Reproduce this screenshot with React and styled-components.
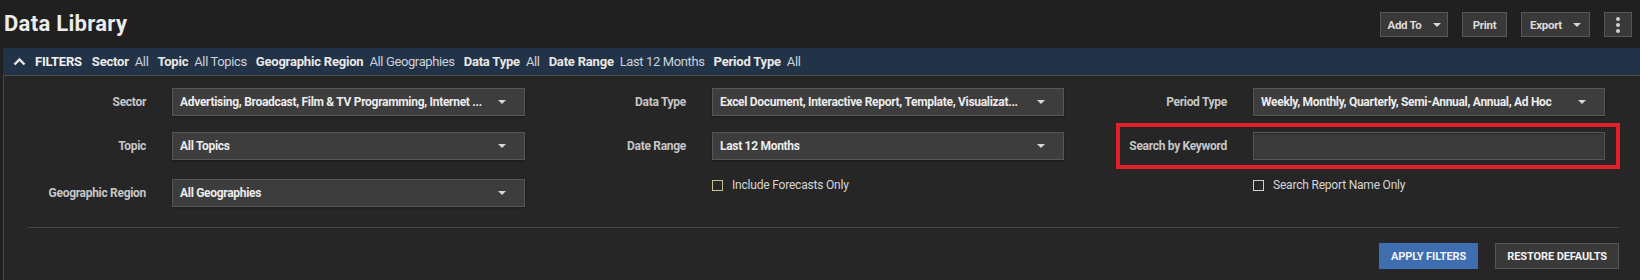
import React from "react";
import styled, { createGlobalStyle } from "styled-components";

const Global = createGlobalStyle`
  html, body { margin: 0; padding: 0; background: #202020; }
  body { font-family: Roboto, "Liberation Sans", sans-serif; color: #e6e6e6; }
  * { box-sizing: border-box; }
`;

const Page = styled.div`
  width: 1640px;
  height: 280px;
  display: flex;
  flex-direction: column;
  background: #202020;
  overflow: hidden;
`;

const Header = styled.div`
  height: 48px;
  display: flex;
  align-items: flex-start;
  justify-content: space-between;
  padding: 0 8px 0 4px;
`;

const Title = styled.h1`
  margin: 10px 0 0;
  font-size: 22px;
  line-height: 28px;
  font-weight: 700;
  color: #ececec;
  letter-spacing: 0.3px;
`;

const Actions = styled.div`
  display: flex;
  gap: 14px;
  margin-top: 12px;
`;

const ToolButton = styled.button`
  height: 25px;
  width: ${(p) => p.$w}px;
  padding: 0;
  display: flex;
  align-items: center;
  justify-content: center;
  gap: 11px;
  background: #393939;
  border: 1px solid #575757;
  color: #dcdcdc;
  font-family: Roboto, "Liberation Sans", sans-serif;
  font-size: 11.5px;
  font-weight: 700;
  letter-spacing: -0.3px;
`;

const Caret = styled.span`
  width: 0;
  height: 0;
  border-left: 4px solid transparent;
  border-right: 4px solid transparent;
  border-top: 4px solid #d8d8d8;
`;

const Dots = styled.span`
  display: flex;
  flex-direction: column;
  gap: 2px;
  & > i {
    width: 4px;
    height: 4px;
    border-radius: 50%;
    background: #d0d0d0;
  }
`;

const FilterBar = styled.div`
  height: 28px;
  margin-left: 3px;
  background: #233347;
  border-bottom: 1px solid #4a4a4a;
  display: flex;
  align-items: center;
  padding-left: 10px;
  font-size: 13px;
  letter-spacing: -0.2px;
`;

const Chevron = styled.svg`
  width: 13px;
  height: 9px;
  margin-right: 9px;
`;

const BarTitle = styled.span`
  font-weight: 700;
  color: #f0f0f0;
  margin-right: 10px;
`;

const Summary = styled.span`
  margin-right: 9px;
  & b { font-weight: 700; color: #e8e8e8; margin-right: 6px; }
  & span { color: #c9d2de; letter-spacing: -0.38px; }
`;

const Panel = styled.div`
  flex: 1;
  margin-left: 3px;
  background: #262626;
  border-left: 1px solid #474747;
  padding: 12px 21px 0 24px;
`;

const Form = styled.div`
  display: flex;
`;

const Column = styled.div`
  width: ${(p) => p.$w}px;
  display: flex;
  flex-direction: column;
  gap: 16px;
`;

const Field = styled.div`
  position: relative;
  display: grid;
  grid-template-columns: ${(p) => p.$label}px 1fr;
  align-items: center;
  height: ${(p) => p.$h || 28}px;
  margin-top: ${(p) => p.$offset || 0}px;
  ${(p) =>
    p.$highlight &&
    `&::after {
      content: "";
      position: absolute;
      left: ${p.$highlight}px;
      right: -15px;
      top: -9px;
      bottom: -9px;
      border: 4px solid #e3202a;
      pointer-events: none;
    }`}
`;

const Label = styled.label`
  text-align: right;
  padding-right: 26px;
  font-size: 12px;
  font-weight: 700;
  color: #c6c6c6;
  letter-spacing: -0.3px;
  white-space: nowrap;
`;

const Select = styled.div`
  height: 28px;
  display: flex;
  align-items: center;
  justify-content: space-between;
  padding: 0 18px 0 7px;
  background: #3d3d3d;
  border: 1px solid #575757;
  box-shadow: 0 1px 2px rgba(0, 0, 0, 0.35);
  font-size: 12px;
  font-weight: 700;
  color: #ececec;
  letter-spacing: -0.3px;
  white-space: nowrap;
`;

const Input = styled.input`
  height: 28px;
  width: 100%;
  background: #3b3b3b;
  border: 1px solid #575757;
  box-shadow: inset 0 1px 2px rgba(0, 0, 0, 0.3);
  outline: none;
`;

const CheckRow = styled.label`
  grid-column: 2;
  display: flex;
  align-items: center;
  gap: 9px;
  font-size: 12px;
  color: #d6d6d6;
  letter-spacing: -0.2px;
`;

const Box = styled.span`
  width: 11px;
  height: 11px;
  border: 1px solid ${(p) => p.$color};
`;

const Divider = styled.hr`
  margin: 20px 0 0;
  border: 0;
  border-top: 1px solid #444;
`;

const Footer = styled.div`
  display: flex;
  justify-content: flex-end;
  gap: 17px;
  margin-top: 15px;
`;

const ActionButton = styled.button`
  height: 26px;
  padding: 0 11px;
  background: ${(p) => (p.$primary ? "#3e6eb0" : "#393939")};
  border: 1px solid ${(p) => (p.$primary ? "#3e6eb0" : "#575757")};
  color: #f2f2f2;
  font-family: Roboto, "Liberation Sans", sans-serif;
  font-size: 11px;
  font-weight: 700;
  letter-spacing: -0.1px;
  text-transform: uppercase;
`;

const summary = [
  ["Sector", "All"],
  ["Topic", "All Topics"],
  ["Geographic Region", "All Geographies"],
  ["Data Type", "All"],
  ["Date Range", "Last 12 Months"],
  ["Period Type", "All"],
];

const SelectField = ({ label, value, labelW, offset }) => (
  <Field $label={labelW} $offset={offset}>
    <Label>{label}</Label>
    <Select>
      <span>{value}</span>
      <Caret />
    </Select>
  </Field>
);

const Check = ({ labelW, text, color }) => (
  <Field $label={labelW} $offset={2} $h={13}>
    <CheckRow>
      <Box $color={color} />
      {text}
    </CheckRow>
  </Field>
);

export default function App() {
  return (
    <Page>
      <Global />
      <Header>
        <Title>Data Library</Title>
        <Actions>
          <ToolButton $w={68}>
            Add To <Caret />
          </ToolButton>
          <ToolButton $w={45}>Print</ToolButton>
          <ToolButton $w={69}>
            Export <Caret />
          </ToolButton>
          <ToolButton $w={28}>
            <Dots>
              <i />
              <i />
              <i />
            </Dots>
          </ToolButton>
        </Actions>
      </Header>
      <FilterBar>
        <Chevron viewBox="0 0 13 9">
          <path d="M1.5 7.5 L6.5 2.5 L11.5 7.5" fill="none" stroke="#e8e8e8" strokeWidth="2.4" />
        </Chevron>
        <BarTitle>FILTERS</BarTitle>
        {summary.map(([k, v]) => (
          <Summary key={k}>
            <b>{k}</b>
            <span>{v}</span>
          </Summary>
        ))}
      </FilterBar>
      <Panel>
        <Form>
          <Column $w={497}>
            <SelectField labelW={144} label="Sector" value="Advertising, Broadcast, Film & TV Programming, Internet ..." />
            <SelectField labelW={144} label="Topic" value="All Topics" />
            <SelectField labelW={144} label="Geographic Region" value="All Geographies" offset={3} />
          </Column>
          <Column $w={539}>
            <SelectField labelW={187} label="Data Type" value="Excel Document, Interactive Report, Template, Visualizat..." />
            <SelectField labelW={187} label="Date Range" value="Last 12 Months" />
            <Check labelW={187} text="Include Forecasts Only" color="#cbbf94" />
          </Column>
          <Column $w={541}>
            <SelectField labelW={189} label="Period Type" value="Weekly, Monthly, Quarterly, Semi-Annual, Annual, Ad Hoc" />
            <Field $label={189} $highlight={52}>
              <Label>Search by Keyword</Label>
              <Input />
            </Field>
            <Check labelW={189} text="Search Report Name Only" color="#cfcfcf" />
          </Column>
        </Form>
        <Divider />
        <Footer>
          <ActionButton $primary>Apply Filters</ActionButton>
          <ActionButton>Restore Defaults</ActionButton>
        </Footer>
      </Panel>
    </Page>
  );
}
